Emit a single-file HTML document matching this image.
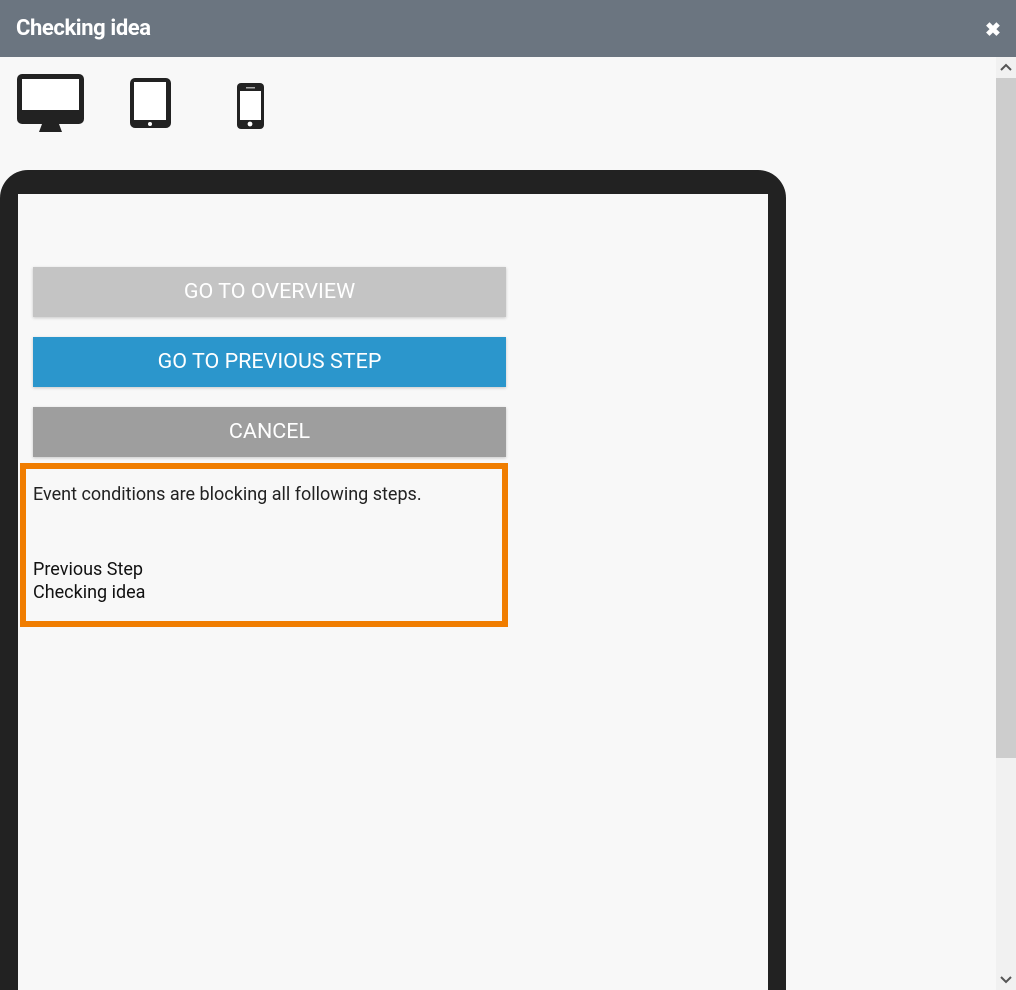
<!DOCTYPE html>
<html style="width:1016px;height:990px;overflow:hidden"><head><style>
*{margin:0;padding:0;box-sizing:border-box}
body{width:1016px;height:990px;overflow:hidden;background:#f8f8f8;font-family:"Roboto","Liberation Sans",sans-serif;position:relative}
.hdr{position:absolute;left:0;top:0;width:1016px;height:57px;background:#6b7580}
.hdr h1{position:absolute;left:16px;top:16px;font-size:22px;color:#fff;font-weight:bold;letter-spacing:-0.4px}
.x{position:absolute;left:985px;top:18px;color:#fff;font-size:19px;font-weight:bold}
.sb{position:absolute;left:996px;top:57px;width:20px;height:933px;background:#f1f1f1}
.th{position:absolute;left:996px;top:78px;width:20px;height:680px;background:#cdcdcd}
.frame{position:absolute;left:0;top:170px;width:786px;height:820px;background:#222;border-radius:28px 28px 0 0}
.inner{position:absolute;left:18px;top:194px;width:750px;height:796px;background:#f8f8f8}
.btn{position:absolute;left:33px;width:473px;height:50px;color:#fff;font-size:21.5px;text-align:center;line-height:50px;box-shadow:0 1px 3px rgba(0,0,0,.2)}
.box{position:absolute;left:20px;top:463px;width:488px;height:164px;border:6px solid #f07d00;font-size:18px;color:#222}
</style></head><body>
<div class="hdr"><h1>Checking idea</h1><div class="x">✖</div></div>
<div class="sb"></div><div class="th"></div>
<svg style="position:absolute;left:999px;top:62px" width="14" height="10"><path d="M2 8 L7 3 L12 8" stroke="#555" stroke-width="2" fill="none"/></svg>
<svg style="position:absolute;left:999px;top:975px" width="14" height="10"><path d="M2 2 L7 7 L12 2" stroke="#555" stroke-width="2" fill="none"/></svg>
<svg style="position:absolute;left:0;top:60px" width="300" height="80">
<rect x="17" y="14" width="67" height="50" rx="5" fill="#222"/>
<rect x="22" y="19" width="57" height="31" fill="#fff"/>
<path d="M42 64 L59 64 L62 72 L39 72Z" fill="#222"/>
<rect x="130" y="18" width="41" height="50" rx="5" fill="#222"/>
<rect x="134" y="22" width="32" height="38" fill="#fff"/>
<circle cx="150" cy="64" r="2" fill="#fff"/>
<rect x="237" y="23" width="27" height="46" rx="4" fill="#222"/>
<rect x="240" y="31" width="21" height="29" fill="#fff"/>
<rect x="246" y="27" width="9" height="1.5" fill="#aaa"/>
<circle cx="250" cy="64" r="2.4" fill="#fff"/>
</svg>
<div class="frame"></div><div class="inner"></div>
<div class="btn" style="top:267px;background:#c4c4c4">GO TO OVERVIEW</div>
<div class="btn" style="top:337px;background:#2b96cc">GO TO PREVIOUS STEP</div>
<div class="btn" style="top:407px;background:#9e9e9e">CANCEL</div>
<div class="box">
<div style="position:absolute;left:7px;top:15px">Event conditions are blocking all following steps.</div>
<div style="position:absolute;left:7px;top:89px;line-height:23px;color:#111">Previous Step<br>Checking idea</div>
</div>
</body></html>
